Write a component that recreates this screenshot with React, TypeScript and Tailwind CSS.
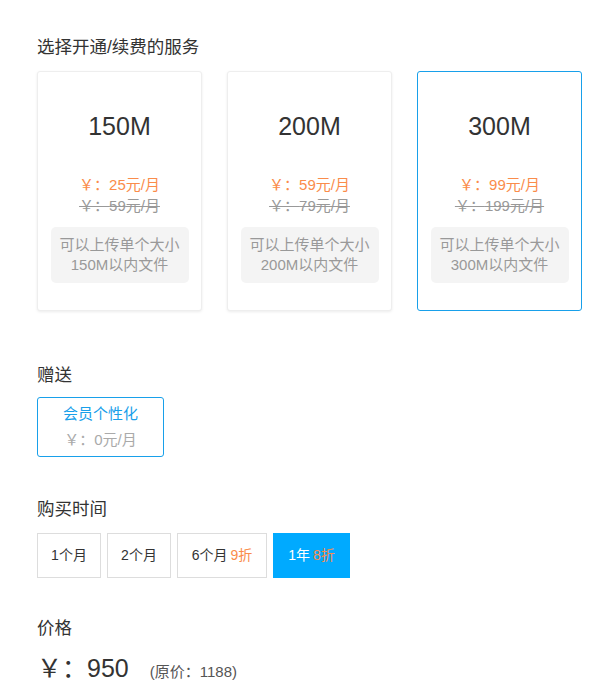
import { useState } from "react";

const FONT = { fontFamily: '"Liberation Sans", Arial, "Noto Sans CJK SC", sans-serif' };

type Plan = { id: string; size: string; price: number; original: number };

const PLANS: Plan[] = [
  { id: "150", size: "150M", price: 25, original: 59 },
  { id: "200", size: "200M", price: 59, original: 79 },
  { id: "300", size: "300M", price: 99, original: 199 },
];

type Period = { id: string; label: string; discount?: string; width: string };

const PERIODS: Period[] = [
  { id: "1m", label: "1个月", width: "w-[64px]" },
  { id: "2m", label: "2个月", width: "w-[64px]" },
  { id: "6m", label: "6个月", discount: "9折", width: "w-[90px]" },
  { id: "1y", label: "1年", discount: "8折", width: "w-[77px]" },
];

export default function App() {
  const [plan, setPlan] = useState("300");
  const [period, setPeriod] = useState("1y");

  return (
    <div style={FONT} className="min-h-screen bg-white px-[37px] pt-[35px] text-[#333]">
      <div className="text-[17.5px] leading-[24px]">选择开通/续费的服务</div>
      <div className="mt-[12px] flex gap-[25px]">
        {PLANS.map((p) => {
          const active = plan === p.id;
          return (
            <button
              key={p.id}
              onClick={() => setPlan(p.id)}
              className={`flex h-[240px] w-[165px] shrink-0 flex-col items-center rounded-[3px] border bg-white pt-[38px] ${
                active ? "border-[#18a0ea]" : "border-[#eeeeee] shadow-[0_1px_3px_rgba(0,0,0,0.08)]"
              }`}
            >
              <div className="text-[25px] leading-[32px] text-[#333]">{p.size}</div>
              <div className="mt-[32px] text-[15px] leading-[21px] text-[#fa8c4b]">￥：{p.price}元/月</div>
              <div className="text-[15px] leading-[21px] text-[#999] line-through">￥：{p.original}元/月</div>
              <div className="mt-[11px] w-[138px] rounded-[5px] bg-[#f4f4f4] py-[8px] text-[15px] leading-[20px] text-[#999]">
                可以上传单个大小
                <br />
                {p.size}以内文件
              </div>
            </button>
          );
        })}
      </div>

      <div className="mt-[52px] text-[17.5px] leading-[24px]">赠送</div>
      <div className="mt-[10px] flex h-[60px] w-[127px] flex-col items-center justify-center rounded-[3px] border border-[#18a0ea]">
        <div className="text-[15px] leading-[26px] text-[#18a0ea]">会员个性化</div>
        <div className="text-[15px] leading-[26px] text-[#aaa]">￥：0元/月</div>
      </div>

      <div className="mt-[40px] text-[17.5px] leading-[24px]">购买时间</div>
      <div className="mt-[12px] flex gap-[6px]">
        {PERIODS.map((p) => {
          const active = period === p.id;
          return (
            <button
              key={p.id}
              onClick={() => setPeriod(p.id)}
              className={`flex h-[45px] ${p.width} items-center justify-center text-[14px] ${
                active ? "bg-[#00aaff] text-white" : "border border-[#dddddd] bg-white text-[#333]"
              }`}
            >
              {p.label}
              {p.discount ? <span className="ml-[3px] text-[#fa8c4b]">{p.discount}</span> : null}
            </button>
          );
        })}
      </div>

      <div className="mt-[38px] text-[17.5px] leading-[24px]">价格</div>
      <div className="mt-[12px] flex items-baseline">
        <span className="text-[25px] leading-[32px] text-[#333]">￥：950</span>
        <span className="ml-[21px] text-[15px] text-[#555]">(原价：1188)</span>
      </div>
    </div>
  );
}
